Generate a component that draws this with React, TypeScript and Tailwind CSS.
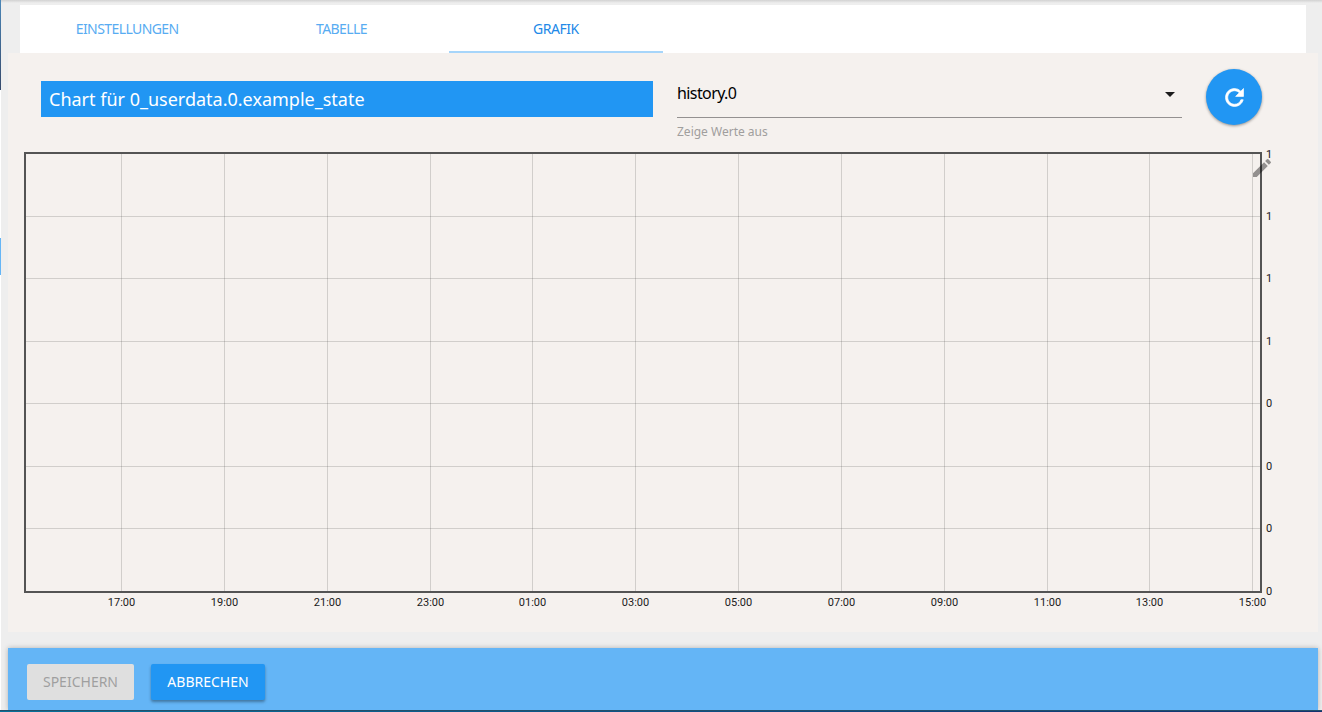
import { MdArrowDropDown, MdEdit } from 'react-icons/md';

const TABS = [
  { label: 'EINSTELLUNGEN', tracking: 'tracking-[-0.58px]' },
  { label: 'TABELLE', tracking: 'tracking-[-0.6px]' },
  { label: 'GRAFIK', tracking: 'tracking-[-0.5px]' },
];
const ACTIVE = 'GRAFIK';

const TIMES = [
  { x: 97, label: '17:00' },
  { x: 200, label: '19:00' },
  { x: 303, label: '21:00' },
  { x: 406, label: '23:00' },
  { x: 508, label: '01:00' },
  { x: 611, label: '03:00' },
  { x: 714, label: '05:00' },
  { x: 817, label: '07:00' },
  { x: 920, label: '09:00' },
  { x: 1023, label: '11:00' },
  { x: 1125, label: '13:00' },
  { x: 1228, label: '15:00' },
];

const VALUES = [
  { y: 2, label: '1' },
  { y: 64, label: '1' },
  { y: 126, label: '1' },
  { y: 189, label: '1' },
  { y: 251, label: '0' },
  { y: 314, label: '0' },
  { y: 376, label: '0' },
  { y: 439, label: '0' },
];

function TabBar() {
  return (
    <nav className="ml-[19px] flex h-12 w-[1286px] bg-white">
      {TABS.map((tab) => (
        <button
          key={tab.label}
          className={`flex h-12 w-[214.33px] items-center justify-center border-b-2 text-[14px] ${tab.tracking} ${
            tab.label === ACTIVE ? 'border-[#a6d5fa] text-[#2189e8]' : 'border-transparent text-[#58acf2]'
          }`}
        >
          {tab.label}
        </button>
      ))}
    </nav>
  );
}

function RefreshIcon() {
  return (
    <svg viewBox="0 0 24 24" className="size-[27px]" fill="currentColor" stroke="currentColor" strokeWidth="0.6">
      <path d="M17.65 6.35A7.958 7.958 0 0 0 12 4c-4.42 0-7.99 3.58-7.99 8s3.57 8 7.99 8c3.73 0 6.84-2.55 7.73-6h-2.08A5.99 5.99 0 0 1 12 18c-3.31 0-6-2.69-6-6s2.69-6 6-6c1.66 0 3.14.69 4.22 1.78L13 11h7V4l-2.35 2.35z" />
    </svg>
  );
}

function Toolbar() {
  return (
    <div className="flex h-[99px] items-start pl-[33px] pt-4">
      <h1 className="mt-3 flex h-9 w-[612px] items-center bg-[#2196f3] pl-2 text-[18px] text-white">
        Chart für 0_userdata.0.example_state
      </h1>
      <div className="ml-6 mt-2 w-[505px]">
        <div className="flex h-[41px] items-start justify-between border-b border-[#949190] pt-[5px]">
          <span className="-mt-px text-[16px] leading-6 tracking-[-0.6px] text-black">history.0</span>
          <MdArrowDropDown className="size-6 text-[#1c1c1c]" />
        </div>
        <div className="mt-1 text-[12px] leading-5 text-[#a09e9d]">Zeige Werte aus</div>
      </div>
      <button className="ml-6 flex size-14 items-center justify-center rounded-full bg-[#2196f3] text-white shadow-[0_1px_3px_rgba(0,0,0,0.4)]">
        <RefreshIcon />
      </button>
    </div>
  );
}

function Chart() {
  return (
    <div className="relative ml-4 h-[480px] w-[1270px]">
      <svg
        width="1270"
        height="480"
        className="block overflow-visible"
        fontFamily="Roboto, sans-serif"
        fontSize="11"
      >
        <g fill="#545454" fillOpacity="0.22">
          {TIMES.map((t) => (
            <rect key={t.x} x={t.x} y="2" width="1" height="437" />
          ))}
          {VALUES.slice(1, 7).map((v) => (
            <rect key={v.y} x="2" y={v.y} width="1234" height="1" />
          ))}
        </g>
        <rect x="1" y="1" width="1236" height="439" fill="none" stroke="#545454" strokeWidth="2" />
        <g fill="#1a1a1a">
          {TIMES.map((t) => (
            <text key={t.label} x={t.x + 0.5} y="454" textAnchor="middle">
              {t.label}
            </text>
          ))}
          {VALUES.map((v) => (
            <text key={v.y} x="1242" y={v.y + 4}>
              {v.label}
            </text>
          ))}
        </g>
      </svg>
      <MdEdit className="absolute left-[1226px] top-[4px] size-6 text-black/40" />
    </div>
  );
}

function Footer() {
  return (
    <footer className="ml-[7px] mt-4 flex h-[62px] w-[1310px] items-start bg-[#64b5f6] pl-[19px] pt-4 text-[14px] shadow-[0_0_5px_rgba(0,0,0,0.25)]">
      <button className="flex h-9 w-[107px] items-center justify-center rounded-[2px] bg-[#dfdfdf] pb-0.5 text-[#9f9f9f]">
        SPEICHERN
      </button>
      <button className="ml-[17px] flex h-9 w-[114px] items-center justify-center rounded-[2px] bg-[#2196f3] pb-0.5 text-white shadow-[0_2px_3px_rgba(0,0,0,0.35)]">
        ABBRECHEN
      </button>
    </footer>
  );
}

export default function App() {
  return (
    <div className="flex h-[712px] w-[1322px] flex-col overflow-hidden font-['Noto_Sans',sans-serif]">
      <div className="flex h-[710px]">
        <div className="flex w-px flex-col bg-white">
          <div className="h-[90px] bg-linear-to-b from-[#4b87b8] to-[#34496b]" />
          <div className="mt-[148px] h-[37px] bg-[#64b5f6]" />
        </div>
        <div className="flex w-[1321px] flex-col overflow-hidden bg-[#eeeeee]">
          <div className="h-[5px] shrink-0 bg-linear-to-b from-[#d2d2d2] to-[#eeeeee] to-60%" />
          <TabBar />
          <main className="ml-[7px] h-[579px] w-[1310px] bg-[#f5f1ee]">
            <Toolbar />
            <Chart />
          </main>
          <Footer />
        </div>
      </div>
      <div className="h-[2px] border-t border-[#22506b] bg-linear-to-r from-[#087099] to-[#123270]" />
    </div>
  );
}
